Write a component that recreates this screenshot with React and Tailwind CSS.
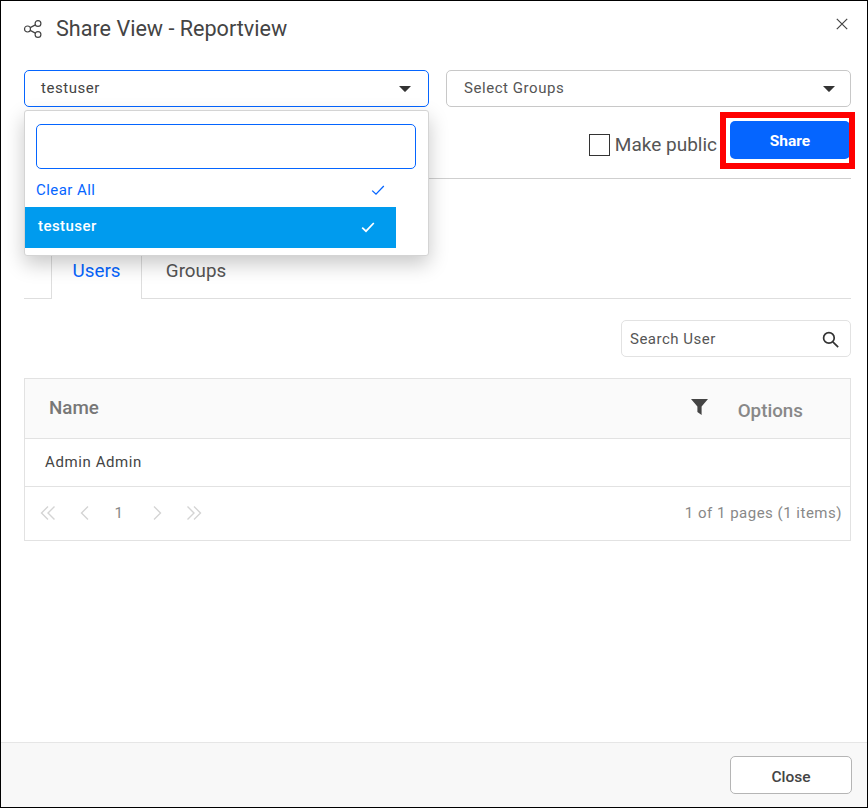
const font = { fontFamily: "Roboto, sans-serif" };

function Caret() {
  return (
    <svg width="12" height="6" viewBox="0 0 12 6" className="shrink-0">
      <path d="M0 0h12L6.6 5.6a.8.8 0 0 1-1.2 0z" fill="#333" />
    </svg>
  );
}

function Check({ color, width = 1.3 }) {
  return (
    <svg width="14" height="14" viewBox="0 0 14 14" fill="none" stroke={color} strokeWidth={width}>
      <path d="M1.2 7.6 5 11.2 12.8 3" />
    </svg>
  );
}

function Chevron({ double, left, className = "" }) {
  return (
    <svg width="16" height="16" viewBox="0 0 16 16" fill="none" stroke="#d4d4d4" strokeWidth="1.4" className={(left ? "" : "-scale-x-100 ") + className}>
      {double ? <path d="M8 1.5 1.5 8 8 14.5M14.5 1.5 8 8l6.5 6.5" /> : <path d="M11 1.5 4.5 8l6.5 6.5" />}
    </svg>
  );
}

export default function App() {
  return (
    <div style={font} className="relative flex h-[808px] w-[868px] flex-col overflow-hidden border border-black bg-white text-[#333]">
      {/* header */}
      <div className="flex h-[69px] shrink-0 items-start justify-between pl-[22px] pr-[19px] pt-[15px]">
        <div className="flex items-center gap-[13px]">
          <svg width="20" height="20" viewBox="0 0 20 20" fill="none" stroke="#444" strokeWidth="1.2">
            <circle cx="4.5" cy="10" r="3" />
            <circle cx="15" cy="4.5" r="2.9" />
            <circle cx="15" cy="15.5" r="2.9" />
            <path d="M7.2 8.6 12.4 5.9M7.2 11.4l5.2 2.7" />
          </svg>
          <span className="text-[21.6px] leading-[26px] text-[#444]">Share View - Reportview</span>
        </div>
        <svg width="12" height="12" viewBox="0 0 12 12" stroke="#444" strokeWidth="1.2" className="mt-[2px]">
          <path d="M.8.8l10.4 10.4M11.2.8.8 11.2" />
        </svg>
      </div>

      <div className="flex flex-1 flex-col pl-[23px] pr-[16px]">
        {/* selects */}
        <div className="flex h-[37px] shrink-0 gap-[17px]">
          <div className="flex w-[405px] items-center justify-between rounded-[5px] border border-[#0565ff] pl-4 pr-[17px] text-[15px] tracking-[0.55px] text-[#444]">
            <span>testuser</span>
            <Caret />
          </div>
          <div className="flex w-[405px] items-center justify-between rounded-[5px] border border-[#c8c8c8] pl-[17px] pr-[15px] text-[15px] tracking-[0.55px] text-[#555]">
            <span>Select Groups</span>
            <Caret />
          </div>
        </div>

        {/* public + share */}
        <div className="flex h-[72px] shrink-0 items-start justify-end border-b border-[#cfcfcf] pt-[14px]">
          <div className="mt-[12px] flex items-center">
            <span className="h-[22px] w-[21px] border border-[#333]" />
            <span className="ml-[5px] pt-px text-[19px] leading-[22px] text-[#555]">Make public</span>
          </div>
          <button className="ml-[13px] mr-px h-[38px] w-[120px] rounded-[5px] bg-[#0565ff] pt-[3px] text-[15.5px] font-bold text-white">Share</button>
        </div>

        {/* tabs */}
        <div className="mt-[71px] flex h-[49px] shrink-0 items-stretch border-b border-[#dedede] pl-[27px]">
          <div className="-mb-px flex w-[91px] items-center justify-center border-x border-[#dedede] bg-white pb-[6px] text-[18.8px] text-[#0565ff]">Users</div>
          <div className="flex w-[108px] items-center justify-center pb-[6px] text-[18.8px] text-[#555]">Groups</div>
        </div>

        {/* search */}
        <div className="mt-[21px] flex justify-end">
          <div className="flex h-[37px] w-[230px] items-center justify-between rounded-[5px] border border-[#e2e2e2] pl-2 pr-[11px] text-[15px] tracking-[0.5px] text-[#555]">
            <span className="pt-px">Search User</span>
            <svg width="17" height="17" viewBox="0 0 16 16" fill="none" stroke="#333" strokeWidth="1.6" className="mt-px">
              <circle cx="6.5" cy="6.5" r="5" />
              <path d="m10.2 10.2 5 5" />
            </svg>
          </div>
        </div>

        {/* table */}
        <div className="mt-[21px] border border-[#e2e2e2]">
          <div className="flex h-[60px] items-center border-b border-[#e2e2e2] bg-[#fafafa] pl-6 pr-[47px]">
            <span className="text-[18.8px] font-medium text-[#777]">Name</span>
            <svg width="17" height="16" viewBox="0 0 17 16" fill="#444" className="ml-auto mb-[3px]">
              <path d="M0 0h17L10.6 7.4V16L6.4 13V7.4z" />
            </svg>
            <span className="ml-[30px] mt-[5px] text-[18.8px] font-medium text-[#888]">Options</span>
          </div>
          <div className="flex h-[48px] items-center border-b border-[#e2e2e2] pl-5 text-[15px] tracking-[0.6px] text-[#444]">Admin Admin</div>
          <div className="flex h-[53px] items-center justify-between pl-[15px] pr-2 text-[15px] tracking-[0.5px] text-[#888]">
            <div className="flex items-center">
              <Chevron double left className="-mt-[2px]" />
              <Chevron left className="-mt-[2px] ml-[21px]" />
              <span className="ml-[21px] w-[10px] text-center">1</span>
              <Chevron className="-mt-[2px] ml-[25px]" />
              <Chevron double className="-mt-[2px] ml-[21px]" />
            </div>
            <span>1 of 1 pages (1 items)</span>
          </div>
        </div>
      </div>

      {/* footer */}
      <div className="flex h-[65px] shrink-0 items-start justify-end border-t border-[#e6e6e6] bg-[#f8f8f8] pr-[15px] pt-[13px]">
        <button className="h-[38px] w-[122px] rounded-[5px] border border-[#b5b5b5] bg-white pt-[5px] text-[15.5px] font-medium text-[#444]">Close</button>
      </div>

      {/* dropdown popup */}
      <div className="absolute left-[23px] top-[109px] h-[146px] w-[405px] rounded-[3px] border border-[#d4d4d4] bg-white shadow-[0_8px_20px_rgba(0,0,0,0.22)]">
        <div className="mx-[11px] mt-[13px] h-[45px] w-[380px] rounded-[5px] border border-[#0565ff]" />
        <div className="mt-[3px] flex h-[35px] w-[371px] items-center justify-between pl-[11px] pr-[11px] text-[15px] tracking-[0.45px] text-[#0565ff]">
          <span className="pt-[2px]">Clear All</span>
          <Check color="#0565ff" />
        </div>
        <div className="flex h-[41px] w-[371px] items-center justify-between bg-[#009bee] pb-[2px] pl-[13px] pr-[21px] text-[15px] font-medium tracking-[0.45px] text-white">
          <span>testuser</span>
          <Check color="#fff" width={1.7} />
        </div>
      </div>

      {/* red annotation */}
      <div className="absolute left-[719px] top-[111px] h-[57px] w-[135px] border-[6px] border-[#ff0000]" />
    </div>
  );
}
